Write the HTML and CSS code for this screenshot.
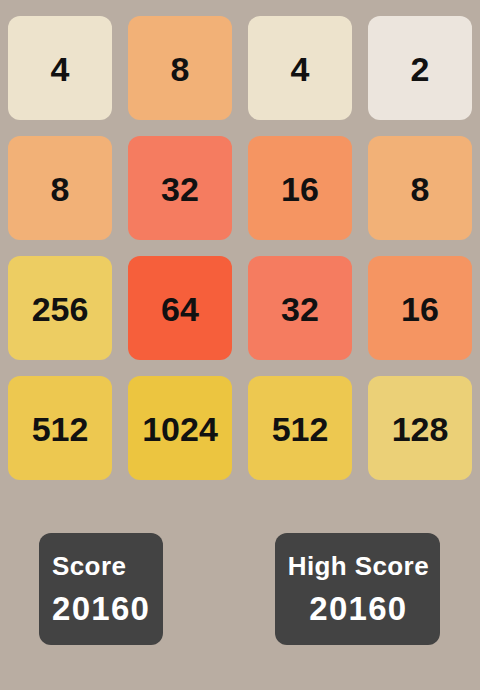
FILE: index.html
```html
<!DOCTYPE html>
<html lang="en">
<head>
  <meta charset="UTF-8" />
  <meta name="viewport" content="width=device-width, initial-scale=1.0"/>
  <title>2048</title>
  <link rel="stylesheet" href="styles.css">
</head>
<body>

  <!-- Board -->
  <div class="board" id="board"></div>

  <!-- Scores -->
  <div class="scores">
    <div class="score-box">
      <div class="label">Score</div>
      <div class="value" id="score">20160</div>
    </div>
    <div class="score-box centered">
      <div class="label">High Score</div>
      <div class="value" id="high-score">20160</div>
    </div>
  </div>

  <script>
    const grid = [
      [4, 8, 4, 2],
      [8, 32, 16, 8],
      [256, 64, 32, 16],
      [512, 1024, 512, 128]
    ];

    const boardEl = document.getElementById("board");

    grid.forEach(row => {
      row.forEach(value => {
        const tile = document.createElement("div");
        tile.className = "tile tile-" + value;
        tile.textContent = value;
        boardEl.appendChild(tile);
      });
    });
  </script>

</body>
</html>
```

FILE: styles.css
```css
body {
  font-family: 'Liberation Sans', Arial, sans-serif;
  background: #b9ada2;
  margin: 0;
  padding: 0;
  width: 480px;
  height: 690px;
}

.board {
  display: grid;
  grid-template-columns: repeat(4, 104px);
  grid-auto-rows: 104px;
  gap: 16px;
  padding: 16px 8px 0;
}

.tile {
  display: flex;
  align-items: center;
  justify-content: center;
  padding-top: 3px;
  box-sizing: border-box;
  border-radius: 12px;
  font-size: 34px;
  font-weight: bold;
  color: #111;
}

.tile-2 { background: #ece5dd; }
.tile-4 { background: #ede3cc; }
.tile-8 { background: #f2b177; }
.tile-16 { background: #f59562; }
.tile-32 { background: #f57c60; }
.tile-64 { background: #f65f3b; }
.tile-128 { background: #ebd077; }
.tile-256 { background: #edcd62; }
.tile-512 { background: #edc850; }
.tile-1024 { background: #ecc540; }

.scores {
  display: flex;
  justify-content: space-between;
  align-items: flex-start;
  padding: 0 40px 0 39px;
  margin-top: 53px;
}

.score-box {
  background: #434343;
  color: #fff;
  border-radius: 12px;
  padding: 18px 13px 16px;
  font-weight: bold;
}

.score-box.centered {
  text-align: center;
  padding-right: 11px;
}

.label {
  font-size: 26px;
  line-height: 30px;
  letter-spacing: 0.4px;
}

.value {
  font-size: 33px;
  line-height: 40px;
  margin-top: 8px;
  letter-spacing: 1.3px;
}
```
